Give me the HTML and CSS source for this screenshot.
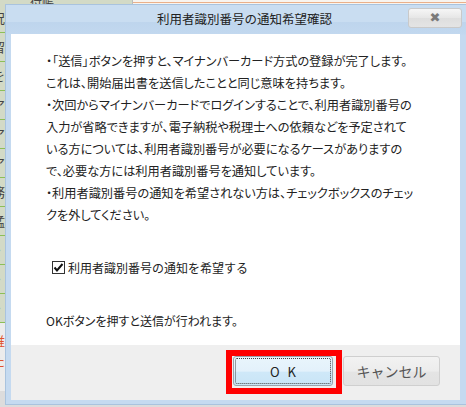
FILE: index.html
```html
<!DOCTYPE html>
<html lang="ja">
<head>
    <meta charset="UTF-8">
    <meta name="viewport" content="width=device-width, initial-scale=1.0">
    <title>利用者識別番号の通知希望確認</title>
    <link rel="stylesheet" href="styles.css">
</head>
<body>
    <div class="page">
        <div class="page-top">
            <span class="page-label">付帳</span>
            <div class="page-box"></div>
        </div>
        <ul class="page-rows">
            <li>況</li>
            <li>留</li>
            <li>を</li>
            <li>ア</li>
            <li>ア</li>
            <li>ア</li>
            <li>務</li>
            <li>猛</li>
            <li>・</li>
            <li>・</li>
            <li>・</li>
            <li class="red">維<br>た</li>
        </ul>
    </div>

    <div class="dialog">
        <div class="dialog-title">
            <span class="title-text">利用者識別番号の通知希望確認</span>
            <button class="close-btn">&#10006;</button>
        </div>

        <div class="dialog-body">
            <p class="message">
                ・「送信」ボタンを押すと、マイナンバーカード方式の登録が完了します。<br>
                これは、開始届出書を送信したことと同じ意味を持ちます。<br>
                ・次回からマイナンバーカードでログインすることで、利用者識別番号の<br>
                入力が省略できますが、電子納税や税理士への依頼などを予定されて<br>
                いる方については、利用者識別番号が必要になるケースがありますの<br>
                で、必要な方には利用者識別番号を通知しています。<br>
                ・利用者識別番号の通知を希望されない方は、チェックボックスのチェッ<br>
                クを外してください。
            </p>

            <label class="check">
                <span class="check-box">
                    <svg width="13" height="13" viewBox="0 0 13 13">
                        <rect x="0.5" y="0.5" width="12" height="12" fill="#fff" stroke="#333"/>
                        <path d="M2.5 6.5 L5 9.5 L10.5 3" fill="none" stroke="#111" stroke-width="2"/>
                    </svg>
                </span>
                利用者識別番号の通知を希望する
            </label>

            <p class="note">OKボタンを押すと送信が行われます。</p>
        </div>

        <div class="dialog-buttons">
            <span class="highlight">
                <button class="btn btn-ok">OK</button>
            </span>
            <button class="btn btn-cancel">キャンセル</button>
        </div>
    </div>
</body>
</html>
```

FILE: styles.css
```css
html, body {
    margin: 0;
    width: 466px;
    height: 407px;
    overflow: hidden;
}

body {
    position: relative;
    background: #dcdcdc;
    font-family: "Noto Sans CJK JP", "Noto Sans", sans-serif;
    color: #222;
}

/* page behind the dialog */
.page-top {
    display: flex;
    height: 4px;
}

.page-label {
    width: 132px;
    background: #d3dac6;
    font-size: 12px;
    line-height: 6px;
    padding-left: 30px;
    color: #444;
    overflow: hidden;
    box-sizing: border-box;
}

.page-box {
    flex: 1;
    border-left: 1px solid #bbb;
    background: linear-gradient(#f8f4ef 0, #f8f4ef 2px, #eab08a 2px, #eab08a 3px, #f8f4ef 3px);
}

.page-rows {
    list-style: none;
    margin: 0;
    padding: 0;
    width: 12px;
    background: #d3dac6;
}

.page-rows li {
    height: 28px;
    border-bottom: 1px solid #8cbf58;
    font-size: 13px;
    line-height: 28px;
    margin-left: -8px;
    color: #444;
    overflow: hidden;
}

.page-rows li.red {
    height: 60px;
    line-height: 20px;
    padding-top: 8px;
    border: none;
    color: #e0522c;
    background: #ececec;
}

/* dialog */
.dialog {
    position: absolute;
    left: 5px;
    top: 4px;
    width: 470px;
    height: 401px;
    box-sizing: border-box;
    border: 1px solid #a9c3de;
    padding: 0 14px 4px 5px;
    background: linear-gradient(#c9ddf1 0, #c9ddf1 17px, #bed5ed 17px, #c2d8ef 29px, #c5daf0 30px);
    display: flex;
    flex-direction: column;
}

.dialog-title {
    height: 29px;
    display: flex;
    align-items: flex-start;
}

.title-text {
    flex: 1;
    padding-left: 146px;
    font-size: 12.5px;
    line-height: 28px;
    color: #222;
}

.close-btn {
    width: 54px;
    height: 20px;
    margin: 3px -2px 0 0;
    padding: 0;
    border: 1px solid #c9c9c9;
    border-radius: 3px;
    background: linear-gradient(#f6f6f6, #e6e6e6 50%, #dedede 50%, #e4e4e4);
    color: #7a7a7a;
    font-size: 13px;
    line-height: 18px;
    font-family: "DejaVu Sans", sans-serif;
}

.dialog-body {
    height: 311px;
    box-sizing: border-box;
    background: #fff;
    padding: 16px 0 0 35px;
}

.message {
    margin: 0;
    font-size: 12.2px;
    line-height: 22px;
    white-space: nowrap;
    font-feature-settings: "palt";
}

.check {
    display: flex;
    align-items: center;
    height: 22px;
    margin-top: 30px;
    padding-left: 6px;
    font-size: 12px;
}

.check-box {
    display: flex;
    margin-right: 3px;
}

.note {
    margin: 32px 0 0;
    font-size: 12px;
    line-height: 22px;
    font-feature-settings: "palt";
}

.dialog-buttons {
    height: 55px;
    box-sizing: border-box;
    background: #efefef;
    display: flex;
    justify-content: flex-end;
    align-items: flex-start;
    gap: 1px;
    padding: 5px 20px 0 0;
}

.highlight {
    display: flex;
    border: 6px solid #ff0000;
    padding: 0 3px 2px 1px;
}

.btn {
    height: 30px;
    border-radius: 3px;
    font-family: "Noto Sans CJK JP", sans-serif;
    font-size: 13px;
    padding: 0;
}

.btn-ok {
    position: relative;
    width: 100px;
    border: 1px solid #9aa3ab;
    background: linear-gradient(#e9f5fc 0, #e3f1fb 50%, #cfe8f8 55%, #c9e5f6 100%);
    color: #222;
    letter-spacing: 8px;
    padding-left: 8px;
}

.btn-ok::after {
    content: "";
    position: absolute;
    inset: 1px;
    border: 1px dotted #444;
    border-radius: 2px;
}

.btn-cancel {
    width: 97px;
    margin-top: 6px;
    border: 1px solid #cfcfcf;
    background: linear-gradient(#f2f2f2, #ececec 50%, #e4e4e4 55%, #e2e2e2);
    color: #555;
    font-size: 14px;
}
```
